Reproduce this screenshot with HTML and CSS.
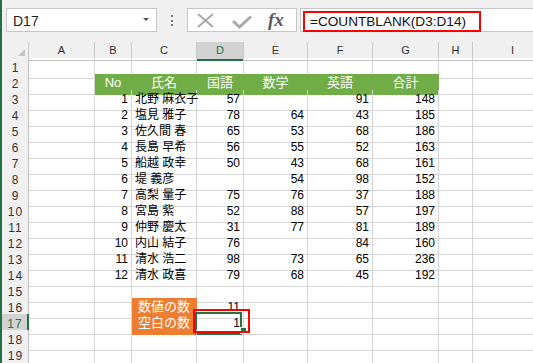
FILE: index.html
```html
<!DOCTYPE html>
<html lang="ja">
<head>
  <meta charset="UTF-8" />
  <title>COUNTBLANK</title>
  <link rel="stylesheet" href="styles.css">
</head>
<body>

<div class="app">
  <div class="toolbar">
    <div class="namebox">
      <span>D17</span>
      <span class="drop"></span>
    </div>
    <div class="grip"><i></i><i></i><i></i></div>
    <div class="fxbtns">
      <svg class="ico-x" width="17" height="15" viewBox="0 0 17 15">
        <path d="M1 1L16 14M16 1L1 14" stroke="#a9a9a9" stroke-width="2" fill="none"/>
      </svg>
      <svg class="ico-ok" width="20" height="14" viewBox="0 0 20 14">
        <path d="M1 6L7.5 12L19 1.5" stroke="#a9a9a9" stroke-width="3" fill="none"/>
      </svg>
      <span class="fx">fx</span>
    </div>
    <div class="formula">
      <span class="formula-text">=COUNTBLANK(D3:D14)</span>
    </div>
  </div>

  <div class="sheet">
    <div class="row colhead">
      <div class="corner"><span class="tri"></span></div>
      <div>A</div><div>B</div><div>C</div><div class="sel">D</div><div>E</div><div>F</div><div>G</div><div>H</div><div>I</div>
    </div>

    <div class="row"><div class="rh">1</div><div></div><div></div><div></div><div></div><div></div><div></div><div></div><div></div><div></div></div>
    <div class="row"><div class="rh">2</div><div></div><div class="th">No</div><div class="th">氏名</div><div class="th">国語</div><div class="th">数学</div><div class="th">英語</div><div class="th">合計</div><div></div><div></div></div>
    <div class="row"><div class="rh">3</div><div></div><div class="n">1</div><div>北野 麻衣子</div><div class="n">57</div><div class="n"></div><div class="n">91</div><div class="n">148</div><div></div><div></div></div>
    <div class="row"><div class="rh">4</div><div></div><div class="n">2</div><div>塩見 雅子</div><div class="n">78</div><div class="n">64</div><div class="n">43</div><div class="n">185</div><div></div><div></div></div>
    <div class="row"><div class="rh">5</div><div></div><div class="n">3</div><div>佐久間 春</div><div class="n">65</div><div class="n">53</div><div class="n">68</div><div class="n">186</div><div></div><div></div></div>
    <div class="row"><div class="rh">6</div><div></div><div class="n">4</div><div>長島 早希</div><div class="n">56</div><div class="n">55</div><div class="n">52</div><div class="n">163</div><div></div><div></div></div>
    <div class="row"><div class="rh">7</div><div></div><div class="n">5</div><div>船越 政幸</div><div class="n">50</div><div class="n">43</div><div class="n">68</div><div class="n">161</div><div></div><div></div></div>
    <div class="row"><div class="rh">8</div><div></div><div class="n">6</div><div>堤 義彦</div><div class="n"></div><div class="n">54</div><div class="n">98</div><div class="n">152</div><div></div><div></div></div>
    <div class="row"><div class="rh">9</div><div></div><div class="n">7</div><div>高梨 量子</div><div class="n">75</div><div class="n">76</div><div class="n">37</div><div class="n">188</div><div></div><div></div></div>
    <div class="row"><div class="rh">10</div><div></div><div class="n">8</div><div>宮島 紫</div><div class="n">52</div><div class="n">88</div><div class="n">57</div><div class="n">197</div><div></div><div></div></div>
    <div class="row"><div class="rh">11</div><div></div><div class="n">9</div><div>仲野 慶太</div><div class="n">31</div><div class="n">77</div><div class="n">81</div><div class="n">189</div><div></div><div></div></div>
    <div class="row"><div class="rh">12</div><div></div><div class="n">10</div><div>内山 結子</div><div class="n">76</div><div class="n"></div><div class="n">84</div><div class="n">160</div><div></div><div></div></div>
    <div class="row"><div class="rh">13</div><div></div><div class="n">11</div><div>清水 浩二</div><div class="n">98</div><div class="n">73</div><div class="n">65</div><div class="n">236</div><div></div><div></div></div>
    <div class="row"><div class="rh">14</div><div></div><div class="n">12</div><div>清水 政喜</div><div class="n">79</div><div class="n">68</div><div class="n">45</div><div class="n">192</div><div></div><div></div></div>
    <div class="row"><div class="rh">15</div><div></div><div></div><div></div><div></div><div></div><div></div><div></div><div></div><div></div></div>
    <div class="row"><div class="rh">16</div><div></div><div></div><div class="lbl">数値の数</div><div class="n">11</div><div></div><div></div><div></div><div></div><div></div></div>
    <div class="row"><div class="rh sel">17</div><div></div><div></div><div class="lbl">空白の数</div><div class="n active">1<span class="handle"></span><span class="mark"></span></div><div></div><div></div><div></div><div></div><div></div></div>
    <div class="row"><div class="rh">18</div><div></div><div></div><div></div><div></div><div></div><div></div><div></div><div></div><div></div></div>
    <div class="row"><div class="rh">19</div><div></div><div></div><div></div><div></div><div></div><div></div><div></div><div></div><div></div></div>
    <div class="row"><div class="rh"></div><div></div><div></div><div></div><div></div><div></div><div></div><div></div><div></div><div></div></div>
  </div>
</div>

</body>
</html>
```

FILE: styles.css
```css
* { box-sizing: border-box; }
html, body {
  margin: 0;
  height: 100%;
  overflow: hidden;
  background: #fff;
  font-family: "Liberation Sans", "Noto Sans CJK JP", sans-serif;
}
.app {
  width: 533px;
  height: 363px;
  overflow: hidden;
  border-left: 2px solid #217346;
  background: #f0f0f0;
}

/* formula bar */
.toolbar {
  display: flex;
  align-items: flex-start;
  height: 42px;
  padding: 8px 0 0 4px;
}
.namebox {
  width: 151px;
  height: 24px;
  border: 1px solid #c6c6c6;
  background: #fff;
  display: flex;
  align-items: center;
  justify-content: space-between;
  padding: 1px 7px 0 6px;
  font-size: 14px;
  color: #222;
}
.drop {
  width: 0;
  height: 0;
  border-left: 3px solid transparent;
  border-right: 3px solid transparent;
  border-top: 3px solid #555;
  margin-top: -2px;
}
.grip {
  width: 30px;
  height: 24px;
  display: flex;
  flex-direction: column;
  align-items: center;
  gap: 2.5px;
  padding-top: 7px;
}
.grip i {
  width: 2px;
  height: 2px;
  background: #777;
}
.fxbtns {
  width: 110px;
  height: 24px;
  border: 1px solid #c6c6c6;
  background: #fff;
  display: flex;
  align-items: flex-start;
  padding-left: 9px;
}
.ico-x { margin-top: 4px; }
.ico-ok { margin: 6px 0 0 18px; }
.fx {
  margin: 0 0 0 16px;
  font-family: "Liberation Serif", serif;
  font-style: italic;
  font-weight: bold;
  font-size: 19px;
  line-height: 22px;
  color: #5a5a5a;
}
.formula {
  flex: 1;
  height: 24px;
  margin-left: 3px;
  border: 1px solid #c6c6c6;
  border-right: none;
  background: #fff;
  padding-left: 2px;
}
.formula-text {
  display: inline-block;
  width: 178px;
  margin-top: 2px;
  height: 21px;
  border: 2px solid #f00;
  padding: 0 0 0 5px;
  font-size: 13.6px;
  line-height: 17px;
  white-space: nowrap;
  color: #111;
}

/* sheet */
.row {
  display: grid;
  grid-template-columns: 27px 66px 37px 65px 47px 64px 65px 66px 34px 80px;
  height: 16px;
  background: #fff;
}
.row > div {
  position: relative;
  border-right: 1px solid #d4d4d4;
  border-bottom: 1px solid #d4d4d4;
  padding: 0 3px;
  font-size: 12px;
  line-height: 19px;
  white-space: nowrap;
  color: #000;
}
.row > .n { text-align: right; }

.colhead { background: #f0f0f0; }
.colhead > div {
  border-right-color: #c8c8c8;
  border-bottom-color: #c0c0c0;
  text-align: center;
  font-size: 11px;
  line-height: 17px;
  color: #333;
}
.colhead > .sel {
  background: #d2d2d2;
  color: #217346;
  border-bottom: 2px solid #217346;
}
.corner {
  display: flex;
  justify-content: flex-end;
  align-items: flex-end;
  padding: 0 3px 4px 0 !important;
}
.tri {
  width: 0;
  height: 0;
  border-left: 7px solid transparent;
  border-bottom: 7px solid #c2c2c2;
}

.row > .rh {
  background: #f0f0f0;
  border-right-color: #c0c0c0;
  border-bottom-color: #d4d4d4;
  text-align: center;
  padding: 0 0 0 1px;
  font-size: 12px;
  letter-spacing: 1px;
  line-height: 20px;
  color: #333;
}
.row > .rh.sel {
  background: #d2d2d2;
  color: #217346;
  border-right: 2px solid #217346;
}

.row > .th {
  background: #70ad47;
  border-color: #70ad47;
  color: #fff;
  text-align: center;
  font-size: 13px;
  line-height: 17px;
}
.row > .lbl {
  background: #ed7d31;
  border-color: #ed7d31;
  color: #fff;
  text-align: center;
  padding: 0;
  font-size: 13px;
  line-height: 17px;
}

/* selected cell and the annotation box round it */
.active::after {
  content: "";
  position: absolute;
  left: -2px;
  top: -2px;
  right: 1px;
  bottom: -1px;
  border: 2px solid #217346;
}
.handle {
  position: absolute;
  left: 44px;
  top: 14px;
  width: 5px;
  height: 5px;
  background: #217346;
  box-shadow: 0 0 0 1px #fff;
  z-index: 2;
}
.mark {
  position: absolute;
  left: -4px;
  top: -5px;
  width: 57px;
  height: 24px;
  border: 2px solid #f00;
  z-index: 3;
}
```
